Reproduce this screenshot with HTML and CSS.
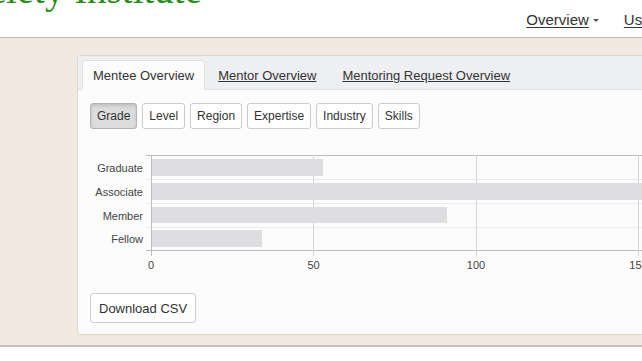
FILE: index.html
```html
<!DOCTYPE html>
<html lang="en">
<head>
  <meta charset="UTF-8">
  <title>Overview</title>
  <link rel="stylesheet" href="styles.css">
</head>
<body>
  <div class="header">
    <div class="logo">Mentoring Society Institute</div>
    <div class="nav">
      <a href="#" class="nav-link">Overview</a><span class="caret"></span>
      <a href="#" class="nav-link users">Users</a>
    </div>
  </div>
  <div class="main">
    <div class="card">
      <div class="tabs">
        <a href="#" class="tab active">Mentee Overview</a>
        <a href="#" class="tab">Mentor Overview</a>
        <a href="#" class="tab">Mentoring Request Overview</a>
      </div>
      <div class="card-body">
        <div class="filters">
          <button class="btn active">Grade</button>
          <button class="btn">Level</button>
          <button class="btn">Region</button>
          <button class="btn">Expertise</button>
          <button class="btn">Industry</button>
          <button class="btn">Skills</button>
        </div>
        <svg class="chart" width="560" height="130" viewBox="0 0 560 130">
          <!-- grid -->
          <line x1="56" y1="10.5" x2="560" y2="10.5" class="axis"/>
          <line x1="56" y1="34.5" x2="560" y2="34.5" class="grid"/>
          <line x1="56" y1="58.5" x2="560" y2="58.5" class="grid"/>
          <line x1="56" y1="82.5" x2="560" y2="82.5" class="grid"/>
          <line x1="56" y1="105.5" x2="560" y2="105.5" class="axis"/>
          <line x1="223.5" y1="10" x2="223.5" y2="111" class="vgrid"/>
          <line x1="386.5" y1="10" x2="386.5" y2="111" class="vgrid"/>
          <line x1="548.5" y1="10" x2="548.5" y2="111" class="vgrid"/>
          <!-- bars -->
          <rect x="62" y="14" width="171" height="17" class="bar"/>
          <rect x="62" y="38" width="500" height="17" class="bar"/>
          <rect x="62" y="62" width="295" height="16" class="bar"/>
          <rect x="62" y="85" width="110" height="17" class="bar"/>
          <line x1="61.5" y1="10" x2="61.5" y2="111" class="axis"/>
          <!-- labels -->
          <text x="53" y="27" class="label">Graduate</text>
          <text x="53" y="51" class="label">Associate</text>
          <text x="53" y="75" class="label">Member</text>
          <text x="53" y="98" class="label">Fellow</text>
          <text x="61" y="124" class="tick">0</text>
          <text x="223.5" y="124" class="tick">50</text>
          <text x="386" y="124" class="tick">100</text>
          <text x="548.5" y="124" class="tick">150</text>
        </svg>
        <button class="btn download">Download CSV</button>
      </div>
    </div>
  </div>
  <div class="footer"></div>
</body>
</html>
```

FILE: styles.css
```css
body {
  margin: 0;
  font-family: "Liberation Sans", Arial, sans-serif;
  color: #333;
  background: #fff;
  width: 642px;
  height: 361px;
  overflow: hidden;
}
.header {
  height: 37px;
  background: #fefefe;
  border-bottom: 1px solid #b9b6b3;
  display: flex;
  justify-content: space-between;
  overflow: hidden;
}
.logo {
  font-family: "Liberation Serif", "Times New Roman", serif;
  font-size: 39px;
  line-height: 40px;
  color: #2f8a25;
  margin-top: -30px;
  margin-left: -227px;
  white-space: nowrap;
  height: 40px;
}
.nav {
  display: flex;
  align-items: center;
  padding-top: 1px;
  white-space: nowrap;
  margin-right: -21px;
}
.nav-link {
  color: #333;
  font-size: 15px;
  text-decoration: underline;
  text-underline-offset: 2px;
}
.caret {
  display: inline-block;
  width: 0;
  height: 0;
  border-left: 3px solid transparent;
  border-right: 3px solid transparent;
  border-top: 3px solid #555;
  margin: 2px 0 0 4px;
}
.users {
  margin-left: 25px;
}
.main {
  background: #f1e8e0;
  padding: 17px 0 10px 77px;
  border-bottom: 2px solid #c6c3c1;
}
.card {
  width: 640px;
  background: #fcfcfd;
  border: 1px solid #dcd6d1;
  border-radius: 4px;
  overflow: hidden;
}
.tabs {
  background: #eeeff1;
  border-bottom: 1px solid #e3e3e5;
  height: 33px;
  display: flex;
  align-items: flex-end;
  padding-left: 4px;
}
.tab {
  font-size: 13px;
  color: #333;
  text-decoration: underline;
  padding: 0 13px;
  height: 29px;
  line-height: 29px;
  margin-bottom: -1px;
}
.tab.active {
  text-decoration: none;
  background: #fcfcfd;
  border: 1px solid #e0e0e2;
  border-bottom: none;
  border-radius: 4px 4px 0 0;
  padding: 0 10px;
}
.card-body {
  padding: 13px 12px 11px;
}
.filters {
  display: flex;
  gap: 5px;
}
.btn {
  font-family: "Liberation Sans", Arial, sans-serif;
  font-size: 12px;
  color: #333;
  background: #fff;
  border: 1px solid #ccc;
  border-radius: 3px;
  padding: 0 6px;
  height: 26px;
}
.btn.active {
  background: #dcdcdd;
  border-color: #b3b3b3;
  box-shadow: inset 0 2px 3px rgba(0, 0, 0, 0.12);
}
.chart {
  display: block;
  margin: 16px 0 18px;
}
.axis {
  stroke: #bdbdbd;
  stroke-width: 1;
}
.grid {
  stroke: #ececec;
  stroke-width: 1;
}
.vgrid {
  stroke: #d6d6d6;
  stroke-width: 1;
}
.bar {
  fill: #dedee0;
}
.label {
  font-size: 11px;
  fill: #444;
  text-anchor: end;
}
.tick {
  font-size: 11px;
  fill: #444;
  text-anchor: middle;
}
.download {
  font-size: 13px;
  height: 30px;
  padding: 0 8px;
}
.footer {
  height: 20px;
  background: #fff;
}
```
